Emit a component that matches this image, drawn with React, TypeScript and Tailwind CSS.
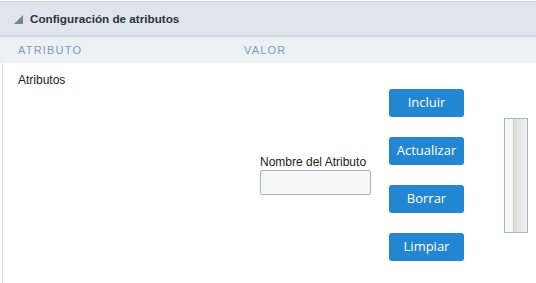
import React from 'react';

const buttons = ['Incluir', 'Actualizar', 'Borrar', 'Limpiar'];

export default function App() {
  return (
    <div className="w-[536px] h-[283px] overflow-hidden bg-white font-['Liberation_Sans',Arial,sans-serif]">
      <div className="mt-px h-[282px] flex flex-col">
        <div className="h-[36px] bg-[#dfe5ec] border-t border-[#ccd5de] border-b-2 border-b-[#cdd8e0] flex items-center pl-[14px] gap-[7px]">
          <svg width="9" height="9" viewBox="0 0 9 9" className="mt-[2px]">
            <polygon points="9,0 9,9 0,9" fill="#7b838c" />
          </svg>
          <span className="text-[11.7px] font-bold text-[#2f3337]">Configuración de atributos</span>
        </div>
        <div className="h-[26px] bg-[#eef1f4] flex items-center text-[11px] tracking-[1.2px] text-[#7b9db5]">
          <span className="w-[244px] pl-[18px]">ATRIBUTO</span>
          <span>VALOR</span>
        </div>
        <div className="flex flex-1 ml-[2px] border-l border-[#d6dee6]">
          <div className="w-[241px] pl-[15px] pt-[8px] text-[12px] text-[#222]">Atributos</div>
          <div className="flex items-center gap-[18px] pt-[26px] self-start pl-[16px]">
            <div className="flex flex-col">
              <label className="text-[12px] text-[#222] leading-[14px] mb-[1px]">Nombre del Atributo</label>
              <input className="w-[111px] h-[25px] bg-[#f7f7f7] border border-[#aab2c0] rounded-[2px]" />
            </div>
            <div className="flex flex-col gap-[20px]">
              {buttons.map((b) => (
                <button
                  key={b}
                  className="w-[75px] h-[28px] rounded-[3px] bg-[#2386d2] text-white text-[13px] font-['Open_Sans',sans-serif]"
                >
                  {b}
                </button>
              ))}
            </div>
            <div className="ml-[22px] w-[24px] h-[115px] border border-[#aab2c0] flex">
              <div className="w-[8px] bg-[#f7f7f7]" />
              <div className="flex-1 border-l border-[#d0d0d0] bg-gradient-to-r from-[#dcdcdc] to-[#f2f2f2]" />
            </div>
          </div>
        </div>
      </div>
    </div>
  );
}
